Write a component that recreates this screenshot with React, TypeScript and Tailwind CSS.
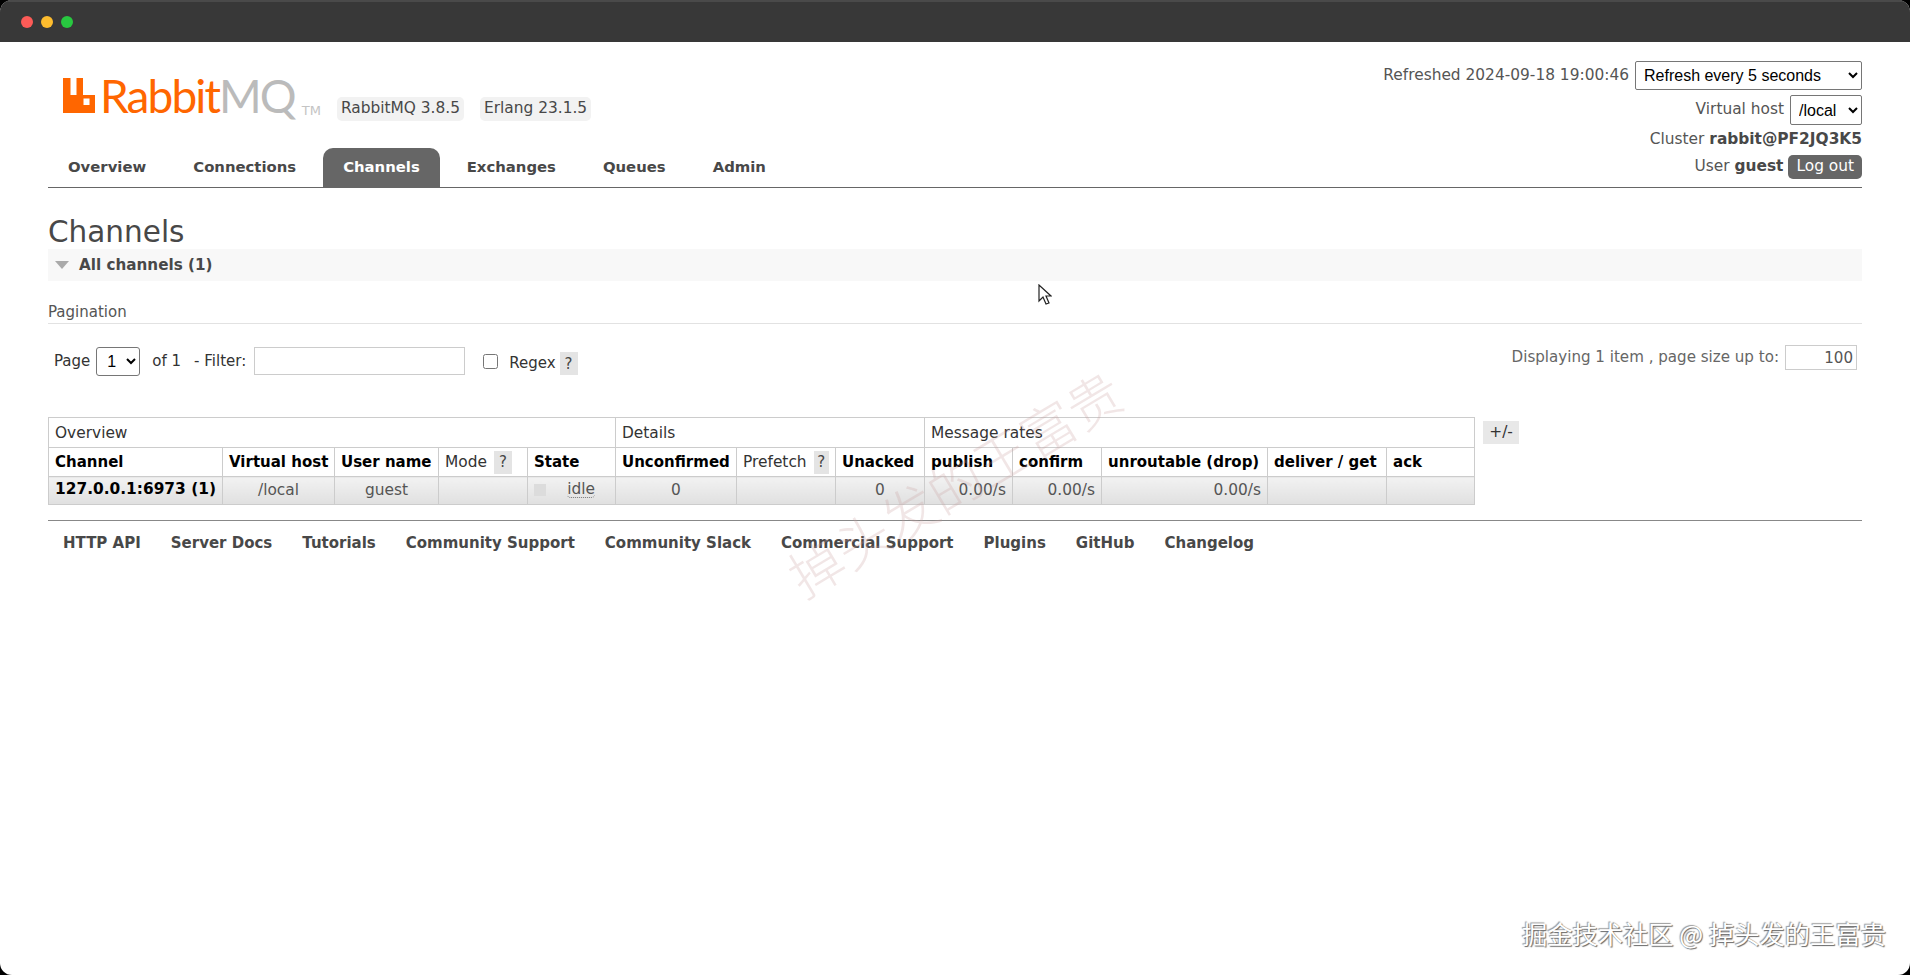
import React from "react";

const sans = "font-['DejaVu_Sans','Noto_Sans_CJK_SC',sans-serif]";

const tabs = ["Overview", "Connections", "Channels", "Exchanges", "Queues", "Admin"];
const footerLinks = [
  "HTTP API",
  "Server Docs",
  "Tutorials",
  "Community Support",
  "Community Slack",
  "Commercial Support",
  "Plugins",
  "GitHub",
  "Changelog",
];
const colWidths = [
  "w-[174px]", "w-[112px]", "w-[104px]", "w-[89px]", "w-[88px]", "w-[121px]", "w-[99px]",
  "w-[89px]", "w-[88px]", "w-[89px]", "w-[166px]", "w-[119px]", "w-[88px]",
];

const Help: React.FC<{ className?: string }> = ({ className = "" }) => (
  <span className={`inline-flex items-center justify-center w-[18px] h-[23px] bg-[#e4e4e4] text-[#444] text-[15px] leading-[20px] font-normal ${className}`}>
    ?
  </span>
);

const Th: React.FC<{ children: React.ReactNode; light?: boolean }> = ({ children, light }) => (
  <th className={`border border-[#ccc] px-[6px] py-0 text-left whitespace-nowrap leading-[20px] ${light ? "text-[15.4px] font-normal text-[#333]" : "text-[15px] font-bold text-black"}`}>
    {children}
  </th>
);

const Td: React.FC<{ children?: React.ReactNode; align?: "center" | "right" }> = ({ children, align = "center" }) => (
  <td className={`border border-[#ccc] px-[6px] pt-0 pb-[2px] text-[15.4px] leading-[20px] text-[#555] bg-gradient-to-b from-[#f2f2f2] to-[#e0e0e0] ${align === "right" ? "text-right" : "text-center"}`}>
    {children}
  </td>
);

const App: React.FC = () => {
  return (
    <div className={`h-screen w-full bg-black overflow-hidden ${sans}`}>
      <div className="relative h-full flex flex-col rounded-[12px] overflow-hidden bg-white">
        {/* Window title bar */}
        <div className="h-[42px] shrink-0 bg-[#383838] border-t-2 border-[#4a4a4a] flex items-center gap-[8px] pl-[21px]">
          <span className="w-[12px] h-[12px] rounded-full bg-[#fc5b57]" />
          <span className="w-[12px] h-[12px] rounded-full bg-[#fdbc2e]" />
          <span className="w-[12px] h-[12px] rounded-full bg-[#28c840]" />
        </div>

        <div className="px-[48px] text-[#484848]">
          {/* Header */}
          <div className="h-[146px] flex justify-between border-b border-[#666]">
            <div className="flex flex-col justify-between">
              <div className="flex items-start pl-[15px] pt-[33px]">
                <svg width="32" height="35" viewBox="0 0 32 35" className="mr-[5px] mt-[3px]">
                  <path
                    fill="#ff6600"
                    fillRule="evenodd"
                    d="M0 0h7.500v17h6V0H20v17h12v18H0zM20.500 20.500v6.500h6v-6.500z"
                  />
                </svg>
                <span className="font-['Lato',sans-serif] font-normal tracking-[-1.9px] text-[46px] leading-[42px] text-[#ff6600]">
                  Rabbit<span className="text-[#bbb]">MQ</span>
                </span>
                <span className="text-[#c4c4c4] text-[13px] mt-[26px] ml-[7px]">TM</span>
                <span className="ml-[16px] mt-[22px] h-[24px] px-[4px] flex items-center rounded-[5px] bg-[#f2f2f2] text-[15.4px] whitespace-nowrap">
                  RabbitMQ 3.8.5
                </span>
                <span className="ml-[16px] mt-[22px] h-[24px] px-[4px] flex items-center rounded-[5px] bg-[#f2f2f2] text-[15.4px] whitespace-nowrap">
                  Erlang 23.1.5
                </span>
              </div>
              <div className="flex gap-[7px]">
                {tabs.map((tab) => (
                  <div
                    key={tab}
                    className={`h-[39px] px-[20px] flex items-center rounded-t-[10px] text-[14.85px] font-bold ${tab === "Channels" ? "bg-[#666] text-white" : "text-[#484848]"}`}
                  >
                    {tab}
                  </div>
                ))}
              </div>
            </div>

            <div className="flex flex-col items-end pt-[19px] text-[15.4px] text-[#555]">
              <div className="flex items-center gap-[6px] h-[29px]">
                <span>Refreshed 2024-09-18 19:00:46</span>
                <select className="w-[227px] h-[29px] border border-[#767676] rounded-[2px] bg-white text-black text-[16px] pl-[4px] font-['Liberation_Sans',sans-serif]">
                  <option>Refresh every 5 seconds</option>
                </select>
              </div>
              <div className="flex items-center gap-[6px] h-[30px] mt-[5px]">
                <span>Virtual host</span>
                <select className="w-[72px] h-[30px] border border-[#767676] rounded-[2px] bg-white text-black text-[16px] pl-[4px] font-['Liberation_Sans',sans-serif]">
                  <option>/local</option>
                </select>
              </div>
              <div className="h-[20px] mt-[5px] flex items-center">
                Cluster&nbsp;<b className="text-[#484848]">rabbit@PF2JQ3K5</b>
              </div>
              <div className="flex items-center gap-[5px] mt-[5px]">
                <span>
                  User <b className="text-[#484848]">guest</b>
                </span>
                <span className="h-[24px] px-[8px] flex items-center rounded-[5px] bg-[#666] text-white">Log out</span>
              </div>
            </div>
          </div>

          {/* Page title */}
          <h1 className="mt-[27px] text-[29.5px] leading-[34px] font-normal text-[#484848]">Channels</h1>

          <div className="h-[32px] flex items-center bg-[#f8f8f8] pl-[7px]">
            <span className="w-0 h-0 border-x-[7px] border-x-transparent border-t-[8px] border-t-[#aaa]" />
            <span className="ml-[10px] text-[15.2px] font-bold text-[#484848]">All channels (1)</span>
          </div>

          {/* Pagination */}
          <div className="mt-[22px] h-[21px] border-b border-[#e2e2e2] text-[15px] leading-[18px] text-[#555]">Pagination</div>

          <div className="mt-[23px] flex items-start justify-between text-[15px]">
            <div className="flex items-center h-[28px] text-[#333] pl-[6px]">
              <span>Page</span>
              <select className="ml-[6px] w-[44px] h-[29px] border border-[#767676] rounded-[3px] bg-white text-black text-[16px] pl-[6px] font-['Liberation_Sans',sans-serif]">
                <option>1</option>
              </select>
              <span className="ml-[12px]">of 1</span>
              <span className="ml-[13px]">- Filter:</span>
              <input className="ml-[8px] w-[211px] h-[28px] border border-[#ccc] bg-white" />
              <input type="checkbox" className="ml-[18px] w-[15px] h-[15px]" />
              <span className="ml-[11px] mt-[5px]">Regex</span>
              <Help className="ml-[4px] mt-[5px]" />
            </div>
            <div className="flex items-center h-[25px] mr-[5px] -mt-[2px] text-[#666] text-[15.1px]">
              <span>Displaying 1 item , page size up to:</span>
              <input
                readOnly
                value="100"
                className="ml-[6px] w-[72px] h-[25px] border border-[#ccc] text-right pr-[3px] text-[#555]"
              />
            </div>
          </div>

          {/* Table */}
          <div className="mt-[42px] flex items-start">
            <table className="table-fixed border-collapse w-[1426px]">
              <colgroup>
                {colWidths.map((w, i) => (
                  <col key={i} className={w} />
                ))}
              </colgroup>
              <thead>
                <tr className="h-[30px]">
                  <th colSpan={5} className="border border-[#ccc] px-[6px] pt-[2px] pb-0 text-left text-[15.4px] font-normal text-[#333]">Overview</th>
                  <th colSpan={3} className="border border-[#ccc] px-[6px] pt-[2px] pb-0 text-left text-[15.4px] font-normal text-[#333]">Details</th>
                  <th colSpan={5} className="border border-[#ccc] px-[6px] pt-[2px] pb-0 text-left text-[15.4px] font-normal text-[#333]">Message rates</th>
                </tr>
                <tr className="h-[29px]">
                  <Th>Channel</Th>
                  <Th>Virtual host</Th>
                  <Th>User name</Th>
                  <Th light>
                    <span className="flex items-center gap-[7px]">Mode <Help /></span>
                  </Th>
                  <Th>State</Th>
                  <Th>Unconfirmed</Th>
                  <Th light>
                    <span className="flex items-center gap-[7px]">Prefetch <Help /></span>
                  </Th>
                  <Th>Unacked</Th>
                  <Th>publish</Th>
                  <Th>confirm</Th>
                  <Th>unroutable (drop)</Th>
                  <Th>deliver / get</Th>
                  <Th>ack</Th>
                </tr>
              </thead>
              <tbody>
                <tr className="h-[28px]">
                  <td className="border border-[#ccc] px-[6px] pt-0 pb-[2px] text-[15.4px] font-bold text-black whitespace-nowrap bg-gradient-to-b from-[#f2f2f2] to-[#e0e0e0]">127.0.0.1:6973 (1)</td>
                  <Td>/local</Td>
                  <Td>guest</Td>
                  <Td />
                  <Td>
                    <span className="flex items-center justify-between pr-[14px]">
                      <span className="w-[12px] h-[12px] bg-[#dcdcdc]" />
                      <span className="border-b border-dotted border-[#777] rounded-b-[4px] leading-[16px]">idle</span>
                    </span>
                  </Td>
                  <Td>0</Td>
                  <Td />
                  <Td>0</Td>
                  <Td align="right">0.00/s</Td>
                  <Td align="right">0.00/s</Td>
                  <Td align="right">0.00/s</Td>
                  <Td />
                  <Td />
                </tr>
              </tbody>
            </table>
            <span className="ml-[8px] mt-[4px] w-[36px] h-[23px] flex items-center justify-center bg-[#e8e8e8] text-[15.4px] text-[#333]">+/-</span>
          </div>

          {/* Footer */}
          <div className="mt-[15px] pt-[11px] pl-[15px] border-t border-[#888] flex gap-[30px] text-[15px] font-bold text-[#484848]">
            {footerLinks.map((link) => (
              <span key={link}>{link}</span>
            ))}
          </div>
        </div>

        {/* Mouse cursor */}
        <svg width="14" height="22" viewBox="0 0 14 22" className="absolute left-[1038px] top-[284px]">
          <path d="M1 1v16l4-4 3 7 3-1-3-7h5z" fill="#fff" stroke="#222" strokeWidth="1.200" />
        </svg>

        {/* Watermarks */}
        <div className="absolute left-[954px] top-[482px] -translate-x-1/2 -translate-y-1/2 -rotate-[31deg] whitespace-nowrap text-[54px] font-['Noto_Sans_CJK_SC',sans-serif] font-light text-[#c89a9a]/25 pointer-events-none">
          掉头发的王富贵
        </div>
        <div className="absolute right-[24px] bottom-[29px] whitespace-nowrap text-[25.300px] leading-[26px] font-['Noto_Sans_CJK_SC',sans-serif] text-white [text-shadow:1px_1px_1px_#666,-1px_-1px_1px_#999]">
          掘金技术社区 @ 掉头发的王富贵
        </div>
      </div>
    </div>
  );
};

export default App;
